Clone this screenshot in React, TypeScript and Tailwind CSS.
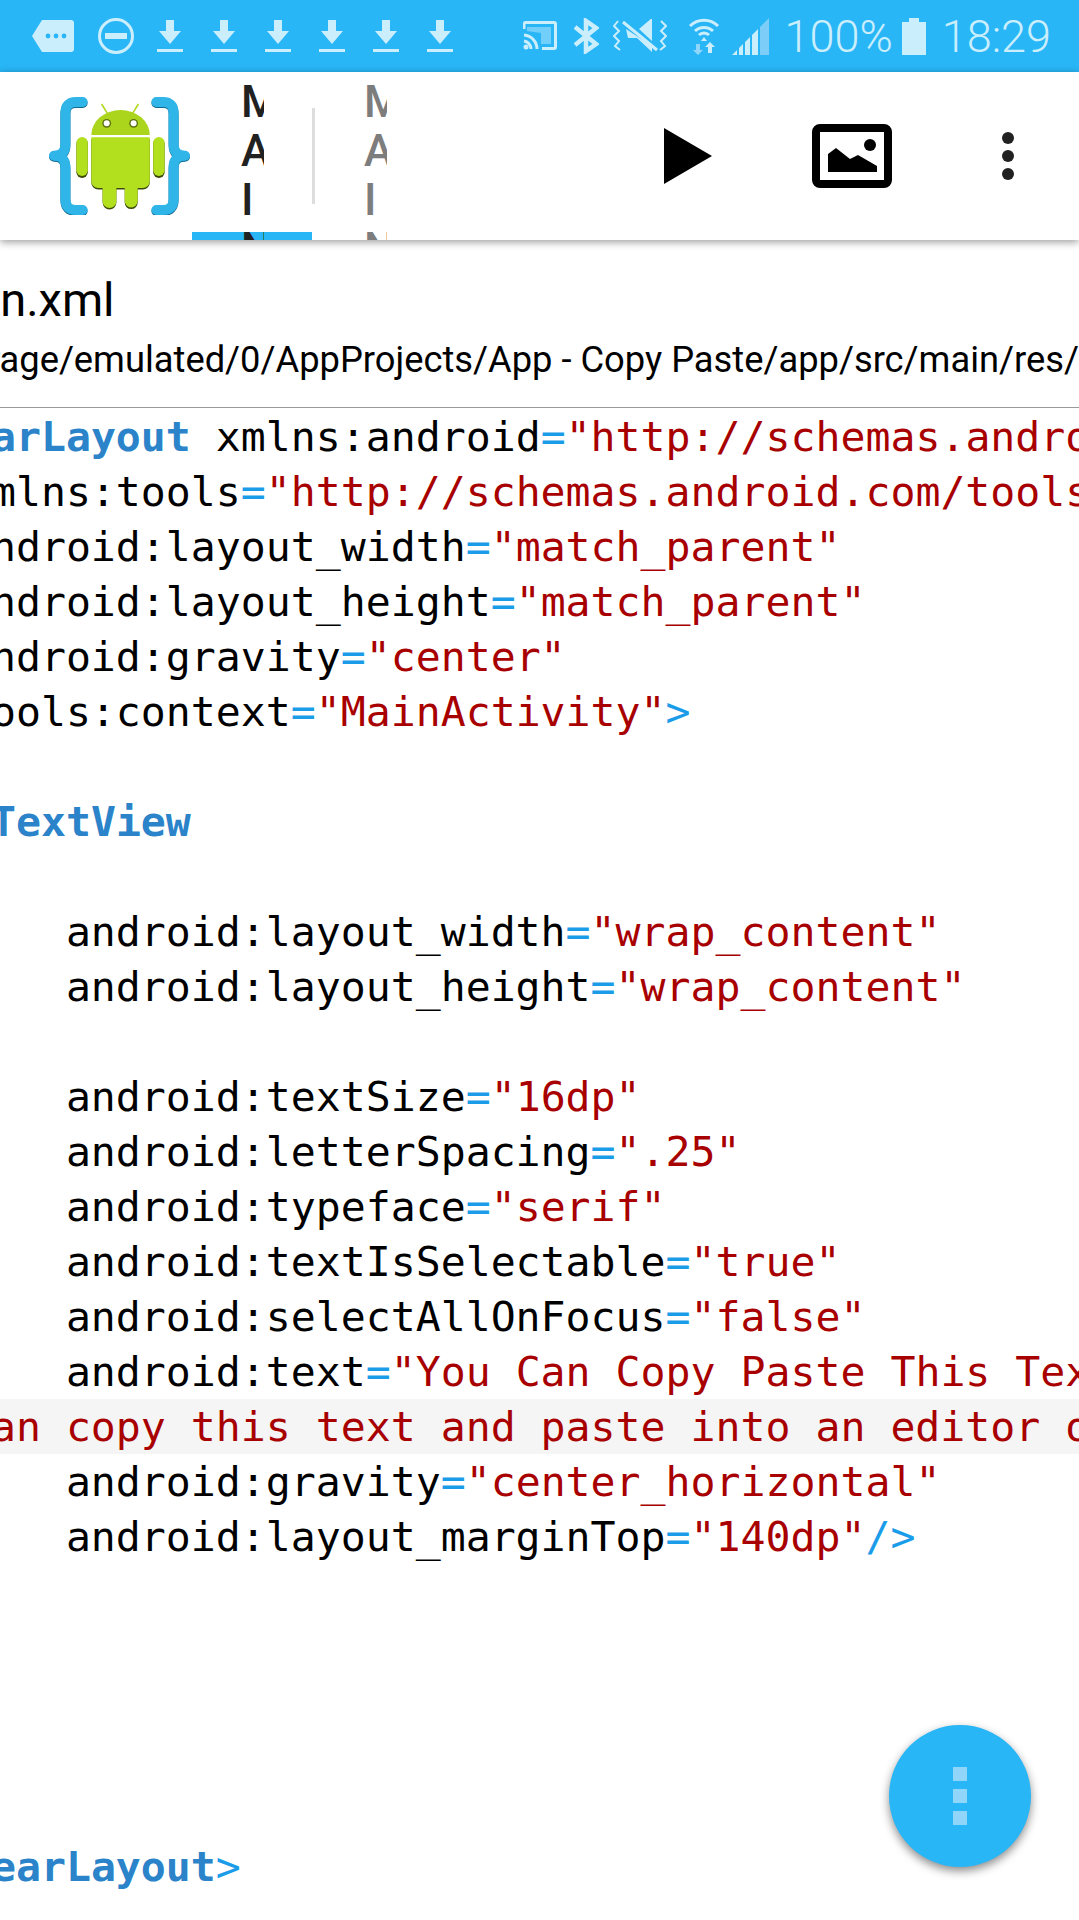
const tag = 'font-bold text-[#2b83c9]';
const sym = 'text-[#1a9ce9]';
const str = 'text-[#a80000]';

type Part = [string, string?];

const lines: { parts: Part[]; hl?: boolean }[] = [
  { parts: [['<', sym], ['LinearLayout', tag], [' xmlns:android'], ['=', sym], ['"http://schemas.android.com/apk/res/android"', str]] },
  { parts: [['    xmlns:tools'], ['=', sym], ['"http://schemas.android.com/tools"', str]] },
  { parts: [['    android:layout_width'], ['=', sym], ['"match_parent"', str]] },
  { parts: [['    android:layout_height'], ['=', sym], ['"match_parent"', str]] },
  { parts: [['    android:gravity'], ['=', sym], ['"center"', str]] },
  { parts: [['    tools:context'], ['=', sym], ['"MainActivity"', str], ['>', sym]] },
  { parts: [] },
  { parts: [['    '], ['<', sym], ['TextView', tag]] },
  { parts: [] },
  { parts: [['        android:layout_width'], ['=', sym], ['"wrap_content"', str]] },
  { parts: [['        android:layout_height'], ['=', sym], ['"wrap_content"', str]] },
  { parts: [] },
  { parts: [['        android:textSize'], ['=', sym], ['"16dp"', str]] },
  { parts: [['        android:letterSpacing'], ['=', sym], ['".25"', str]] },
  { parts: [['        android:typeface'], ['=', sym], ['"serif"', str]] },
  { parts: [['        android:textIsSelectable'], ['=', sym], ['"true"', str]] },
  { parts: [['        android:selectAllOnFocus'], ['=', sym], ['"false"', str]] },
  { parts: [['        android:text'], ['=', sym], ['"You Can Copy Paste This Text', str]] },
  { parts: [['You can copy this text and paste into an editor of your choice', str]], hl: true },
  { parts: [['        android:gravity'], ['=', sym], ['"center_horizontal"', str]] },
  { parts: [['        android:layout_marginTop'], ['=', sym], ['"140dp"', str], ['/>', sym]] },
  { parts: [] },
  { parts: [] },
  { parts: [] },
  { parts: [] },
  { parts: [] },
  { parts: [['</', sym], ['LinearLayout', tag], ['>', sym]] },
];

function Logo() {
  const body = 'M42.3 40.3H100.8V84a7 7 0 0 1-7 7H88.7V104a6.5 6.5 0 0 1-13 0V91H67.4V104a6.9 6.9 0 0 1-13.8 0V91H49.3a7 7 0 0 1-7-7Z';
  const left = 'M33.6 5H27Q16.4 5 16.4 16V47Q16.4 58.7 5 58.7Q16.4 58.7 16.4 70V102Q16.4 113 27 113H33.6';
  const right = 'M107.4 5H114Q124.6 5 124.6 16V47Q124.6 58.7 136 58.7Q124.6 58.7 124.6 70V102Q124.6 113 114 113H107.4';
  return (
    <svg width="141" height="118" viewBox="0 0 141 118">
      <g fill="none" stroke="#10698f" strokeWidth="10" strokeLinecap="round" strokeLinejoin="round" transform="translate(0 1)">
        <path d={left} />
        <path d={right} />
      </g>
      <g fill="none" stroke="#2fb5e8" strokeWidth="10" strokeLinecap="round" strokeLinejoin="round">
        <path d={left} />
        <path d={right} />
      </g>
      <path d="M52.6 7 58.4 16.3M89.4 7 83.600 16.3" stroke="#b2d81f" strokeWidth="1.6" />
      <path d="M42.3 38a29.25 25 0 0 1 58.5 0Z" fill="#abd41c" />
      <circle cx="57.7" cy="26.3" r="4.4" fill="#5c7010" />
      <circle cx="84.6" cy="26.3" r="4.4" fill="#5c7010" />
      <circle cx="57.7" cy="26.3" r="3" fill="#fff" />
      <circle cx="84.6" cy="26.3" r="3" fill="#fff" />
      <path d={body} fill="#3c4a08" transform="translate(0 1.6)" />
      <path d={body} fill="#b2e01f" />
      <rect x="27.4" y="41" width="11.4" height="40" rx="5.7" fill="#3c4a08" />
      <rect x="27.4" y="40" width="11.4" height="39" rx="5.7" fill="#b2e01f" />
      <rect x="104.2" y="41" width="11.4" height="40" rx="5.7" fill="#3c4a08" />
      <rect x="104.2" y="40" width="11.4" height="39" rx="5.7" fill="#b2e01f" />
    </svg>
  );
}

function Download() {
  return (
    <svg width="26" height="32" viewBox="0 0 26 32" fill="#cbeefd">
      <path d="M9 0h8v11h7L13 24 2 11h7Z" />
      <rect x="0" y="29" width="26" height="3" />
    </svg>
  );
}

function StatusLeft() {
  return (
    <div className="flex items-center">
      <svg className="ml-[32px]" width="42" height="32" viewBox="0 0 42 32">
        <path d="M10 0H39a3 3 0 0 1 3 3V29a3 3 0 0 1-3 3H10L0 16Z" fill="#cbeefd" />
        <circle cx="16" cy="16" r="2.4" fill="#29b6f6" />
        <circle cx="24" cy="16" r="2.4" fill="#29b6f6" />
        <circle cx="32" cy="16" r="2.4" fill="#29b6f6" />
      </svg>
      <svg className="ml-[24px]" width="36" height="36" viewBox="0 0 36 36">
        <circle cx="18" cy="18" r="16.5" fill="none" stroke="#cbeefd" strokeWidth="3" />
        <rect x="7" y="15" width="22" height="6" fill="#cbeefd" />
      </svg>
      <div className="ml-[23px] flex gap-[28px]">
        <Download />
        <Download />
        <Download />
        <Download />
        <Download />
        <Download />
      </div>
    </div>
  );
}

function StatusRight() {
  return (
    <div className="ml-auto flex items-center pr-[28px] text-[45px] leading-none font-light text-[#cbeefd]">
      <svg width="34" height="30" viewBox="0 0 34 30" fill="none" stroke="#cbeefd" strokeWidth="3">
        <path d="M1 8V3a1.5 1.5 0 0 1 1.5-1.5H31A1.5 1.5 0 0 1 32.500 3V26a1.500 1.500 0 0 1-1.500 1.500H19" />
        <path d="M1 14a14 14 0 0 1 13 14M1 20a8 8 0 0 1 7 8" />
        <circle cx="3" cy="26" r="2.500" fill="#cbeefd" stroke="none" />
        <path d="M4 6H28V23H18V12L4 10Z" fill="#cbeefd" stroke="none" opacity="0.45" />
      </svg>
      <svg className="ml-[17px]" width="25" height="36" viewBox="0 0 25 36" fill="none" stroke="#cbeefd" strokeWidth="4.500">
        <path d="M1 9 22 26 12 33V3L22 10 1 27" />
      </svg>
      <svg className="ml-[14px]" width="54" height="34" viewBox="0 0 54 34" fill="none" stroke="#cbeefd">
        <path d="M26 10 39 -1V22Z" fill="#cbeefd" stroke="none" />
        <path d="M13 10 15 19H24L39 33V27Z" fill="#cbeefd" stroke="none" />
        <path d="M10 3 44 31" strokeWidth="3" />
        <path d="M5 2 1 7 6 12 1 17 6 22 2 27 7 31" strokeWidth="2" />
        <path d="M48 2 53 7 48 12 53 17 48 22 52 27 47 31" strokeWidth="2" />
      </svg>
      <svg className="ml-[21px]" width="32" height="38" viewBox="0 0 32 38" fill="none" stroke="#cbeefd" strokeWidth="3">
        <path d="M2 9a20 20 0 0 1 28 0M7 14a13 13 0 0 1 18 0M11 18a7 7 0 0 1 10 0" />
        <path d="M16 20 13 24H19Z" fill="#cbeefd" stroke="none" />
        <path d="M8 27H12V33H15L10 38 5 33H8Z" fill="#8fd6fa" stroke="none" />
        <path d="M20 36V30H17L22 25 27 30H24V36Z" fill="#cbeefd" stroke="none" />
      </svg>
      <svg className="ml-[12px]" width="37" height="38" viewBox="0 0 37 38">
        <path d="M0 38 5 33V38ZM7 31 11 27V38H7ZM13 25 18 20V38H13ZM20 18 26 12V38H20Z" fill="#cbeefd" />
        <path d="M28 10 37 1V38H28Z" fill="#7ccdf8" />
      </svg>
      <span className="ml-[16px]">100%</span>
      <svg className="ml-[9px]" width="24" height="37" viewBox="0 0 24 37" fill="#cbeefd">
        <path d="M7 0H17V4H24V37H0V4H7Z" />
      </svg>
      <span className="ml-[16px]">18:29</span>
    </div>
  );
}

function Tab({ active }: { active?: boolean }) {
  return (
    <div className="relative h-full w-[120px] shrink-0 overflow-hidden">
      {active && <div className="absolute bottom-0 left-0 h-[8px] w-[120px] bg-[#29b6f6]" />}
      <div
        className={
          active
            ? 'relative ml-[49px] w-[23px] overflow-hidden pt-[6px] text-[44px] leading-[49px] font-medium break-all text-[#212121]'
            : 'relative ml-[49px] w-[23px] overflow-hidden pt-[6px] text-[44px] leading-[49px] font-medium break-all text-[#7d7d7d]'
        }
      >
        MAIN
      </div>
    </div>
  );
}

function Toolbar() {
  return (
    <div className="relative z-10 flex h-[168px] shrink-0 items-center bg-white shadow-[0_2px_8px_rgba(0,0,0,0.4)]">
      <div className="flex h-full w-[192px] shrink-0 items-center pl-[49px]">
        <Logo />
      </div>
      <Tab active />
      <div className="h-[96px] w-[3px] shrink-0 bg-[#dddddd]" />
      <Tab />
      <svg className="ml-[229px]" width="48" height="56" viewBox="0 0 48 56">
        <path d="M0 0 48 28 0 56Z" fill="#000" />
      </svg>
      <svg className="ml-[100px]" width="80" height="64" viewBox="0 0 80 64">
        <rect x="4" y="4" width="72" height="56" rx="4" fill="none" stroke="#000" strokeWidth="8" />
        <path d="M16 48V30L24 24 38 35 46 31 65 42V48Z" fill="#000" />
        <circle cx="58" cy="21" r="6" fill="#000" />
      </svg>
      <div className="ml-[110px] flex flex-col gap-[6px]">
        <div className="h-[12px] w-[12px] rounded-full bg-[#212121]" />
        <div className="h-[12px] w-[12px] rounded-full bg-[#212121]" />
        <div className="h-[12px] w-[12px] rounded-full bg-[#212121]" />
      </div>
    </div>
  );
}

export default function App() {
  return (
    <div className="relative flex h-[1920px] w-[1079px] flex-col overflow-hidden bg-white font-['Roboto',sans-serif]">
      <div className="flex h-[72px] shrink-0 items-center bg-[#29b6f6]">
        <StatusLeft />
        <StatusRight />
      </div>
      <Toolbar />

      <div className="h-[168px] shrink-0 overflow-hidden border-b border-[#999999] whitespace-nowrap text-black">
        <div className="ml-[-78px] pt-[30px] text-[47px] leading-[60px]">main.xml</div>
        <div className="ml-[-78px] pt-[5px] text-[36.3px] leading-[50px]">
          /storage/emulated/0/AppProjects/App - Copy Paste/app/src/main/res/layout/main.xml
        </div>
      </div>

      <div className="overflow-hidden pt-[1px] font-['DejaVu_Sans_Mono',monospace] text-[41.5px] leading-[55px] text-black">
        {lines.map((line, i) => (
          <div key={i} className={line.hl ? 'h-[55px] bg-[#f5f5f5]' : 'h-[55px]'}>
            <div className="ml-[-134px] whitespace-pre">
              {line.parts.map((p, j) => (
                <span key={j} className={p[1]}>
                  {p[0]}
                </span>
              ))}
            </div>
          </div>
        ))}
      </div>

      <div className="absolute top-[1725px] left-[889px] flex h-[142px] w-[142px] flex-col items-center justify-center gap-[8px] rounded-full bg-[#29b6f6] shadow-[0_4px_10px_rgba(0,0,0,0.45)]">
        <div className="h-[14px] w-[14px] bg-[#8fd6fa]" />
        <div className="h-[14px] w-[14px] bg-[#8fd6fa]" />
        <div className="h-[14px] w-[14px] bg-[#8fd6fa]" />
      </div>
    </div>
  );
}
